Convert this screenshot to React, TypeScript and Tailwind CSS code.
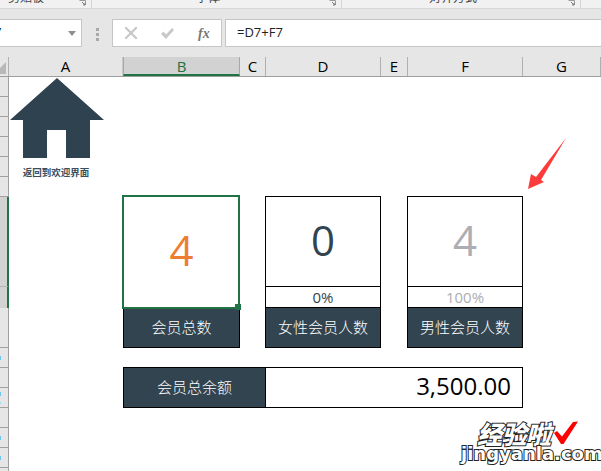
import React from 'react';
import { X } from 'lucide-react';

const columns = [
  { name: 'A', cls: 'w-[114px] border-r border-[#c8c8c8] text-black' },
  { name: 'B', cls: 'w-[117px] bg-[#d2d2d2] border-x border-[#a8a8a8] border-b-2 border-b-[#217346] text-[#217346]' },
  { name: 'C', cls: 'w-[26px] border-r border-[#b0b0b0] text-black' },
  { name: 'D', cls: 'w-[115px] border-r border-[#b0b0b0] text-black' },
  { name: 'E', cls: 'w-[27px] border-r border-[#b0b0b0] text-black' },
  { name: 'F', cls: 'w-[115px] border-r border-[#b0b0b0] text-black' },
  { name: 'G', cls: 'w-[78px] border-r border-[#b0b0b0] text-black' },
];

// gutter rows, the last ones run off the bottom of the window
const plainTop = [0, 1, 2, 3, 4, 5];
const plainBottom = [1, 0, 2, 0, 1, 1, 0];

const Launcher = () => (
  <svg width="8" height="6" viewBox="0 0 8 6" className="shrink-0">
    <path d="M0.5 0.5H6.5V5" fill="none" stroke="#9a9a9a" />
    <path d="M3 2L6 5M4 5H6V3" fill="none" stroke="#7a7a7a" />
  </svg>
);

const Ribbon = () => (
  <div className="flex h-[9px] overflow-hidden bg-[#f1f1f1] border-b border-[#d6d6d6] text-[12px] leading-[12px] text-[#444444]">
    <div className="flex w-[92px] pl-[8px] pr-[4px] justify-between border-r border-[#d6d6d6]">
      <span className="-mt-[8px]">剪贴板</span>
      <Launcher />
    </div>
    <div className="flex w-[250px] pl-[104px] pr-[4px] justify-between border-r border-[#d6d6d6]">
      <span className="-mt-[8px]">字体</span>
      <Launcher />
    </div>
    <div className="flex w-[239px] pl-[87px] pr-[4px] justify-between border-r border-[#d6d6d6]">
      <span className="-mt-[8px]">对齐方式</span>
      <Launcher />
    </div>
  </div>
);

const FormulaBar = () => (
  <div className="flex h-[48px] items-start pt-[10px] bg-[#e6e6e6]">
    <div className="flex items-center justify-between w-[82px] h-[28px] bg-white border border-l-0 border-[#c6c6c6] overflow-hidden">
      <span className="-ml-[6px] text-[13px] text-black">7</span>
      <span className="mr-[5px] border-x-[4px] border-t-[5px] border-x-transparent border-t-[#8f8f8f]" />
    </div>
    <div className="flex flex-col gap-[2px] ml-[14px] mt-[9px] w-[16px]">
      <span className="w-[3px] h-[3px] bg-[#a8a8a8]" />
      <span className="w-[3px] h-[3px] bg-[#a8a8a8]" />
      <span className="w-[3px] h-[3px] bg-[#a8a8a8]" />
    </div>
    <div className="flex items-center w-[110px] h-[28px] bg-white border border-[#c6c6c6]">
      <X className="w-[20px] h-[20px] ml-[8px] text-[#c8c8c8]" strokeWidth={2.8} />
      <svg width="15" height="13" viewBox="0 0 15 13" className="ml-[19px]">
        <path d="M1 7L3.5 4.5L6 7.5L12 1L14 3L6 12Z" fill="#c8c8c8" />
      </svg>
      <span className="ml-[23px] text-[14px] font-bold italic text-[#777777] font-['Liberation_Serif',serif]">fx</span>
    </div>
    <div className="flex items-center flex-1 h-[28px] ml-[3px] pl-[11px] bg-white border border-r-0 border-[#c6c6c6] text-[13px] text-[#222222]">
      =D7+F7
    </div>
  </div>
);

const ColumnHeader = () => (
  <div className="flex h-[20px] bg-[#e6e6e6] border-b border-[#9e9e9e] text-[15px] leading-[19px]">
    <div className="relative w-[9px] border-r border-[#b0b0b0]">
      <svg width="6" height="12" viewBox="0 0 6 12" className="absolute left-0 top-[5px]">
        <path d="M0 12V6L6 0V12Z" fill="#b8b8b8" />
      </svg>
    </div>
    {columns.map((c) => (
      <div key={c.name} className={`text-center ${c.cls}`}>
        {c.name}
      </div>
    ))}
  </div>
);

const Gutter = () => (
  <div className="flex flex-col w-[9px] shrink-0 bg-[#e6e6e6] border-r border-[#a0a0a0]">
    {plainTop.map((r) => (
      <div key={r} className="h-[20px] shrink-0 border-b border-[#a0a0a0]" />
    ))}
    <div className="h-[90px] shrink-0 -mr-px bg-[#d2d2d2] border-r-2 border-b border-r-[#217346] border-b-[#b4b4b4]" />
    <div className="h-[21px] shrink-0 -mr-px bg-[#d2d2d2] border-r-2 border-r-[#217346]" />
    <div className="h-[40px] shrink-0 border-b border-[#a0a0a0]" />
    {plainBottom.map((specks, i) => (
      <div key={i} className="flex flex-col justify-center gap-[6px] h-[20px] shrink-0 border-b border-[#a0a0a0]">
        {specks > 0 && <span className="w-px h-[4px] bg-[#6cc5f0]" />}
        {specks > 1 && <span className="w-px h-[2px] bg-[#9adcf5]" />}
      </div>
    ))}
  </div>
);

const HomeLink = () => (
  <div className="w-[114px] pt-[1px] pl-[1px]">
    <div className="flex flex-col items-center w-[94px]">
      <svg width="94" height="81" viewBox="0 0 94 81">
        <path d="M47 0L94 42H80V80H56V52H37V80H13V42H0Z" fill="#2f424f" />
      </svg>
      <span className="mt-[7px] -ml-[2px] text-[9.5px] leading-[12px] font-bold text-[#3b4d59] font-['Noto_Sans_CJK_SC',sans-serif]">
        返回到欢迎界面
      </span>
    </div>
  </div>
);

const TotalCard = () => (
  <div className="flex flex-col w-[117px] h-[152px]">
    <div className="relative flex items-center justify-center h-[112px] pb-[6px] text-[42px] text-[#ed7d31]">
      4
      <div className="absolute -left-px -top-px right-0 -bottom-px border-2 border-[#217346]" />
      <div className="absolute -right-px -bottom-[2px] w-[6px] h-[6px] bg-[#217346]" />
    </div>
    <div className="flex items-center justify-center h-[40px] bg-[#32444f] border border-t-0 border-black text-[15px] font-light text-white font-['Noto_Sans_CJK_SC',sans-serif]">
      会员总数
    </div>
  </div>
);

const StatCard = ({ value, pct, label, color }: { value: string; pct: string; label: string; color: string }) => (
  <div className="flex flex-col w-[116px] h-[152px] border border-black">
    <div className={`flex items-center justify-center h-[90px] pb-[4px] border-b border-black text-[42px] ${color}`}>{value}</div>
    <div className={`flex items-center justify-center h-[21px] border-b border-black text-[15px] ${color}`}>{pct}</div>
    <div className="flex items-center justify-center flex-1 bg-[#32444f] text-[15px] font-light text-white font-['Noto_Sans_CJK_SC',sans-serif]">
      {label}
    </div>
  </div>
);

const Watermark = () => (
  <div className="absolute left-[461px] top-[419px] flex flex-col w-[130px]">
    <div className="flex items-center h-[28px] pl-[16px]">
      <span className="text-[25px] leading-[28px] font-black italic tracking-[-0.5px] text-white [-webkit-text-stroke:2px_#222222] [paint-order:stroke_fill] font-['Noto_Sans_CJK_SC',sans-serif]">
        经验啦
      </span>
      <svg width="24" height="24" viewBox="0 0 24 24" className="ml-[3px]">
        <path d="M0 12L3 10L8 15.5L19 1L24 0.5L9.5 23H7Z" fill="#ff0000" />
      </svg>
    </div>
    <span className="-mt-[2px] text-[18px] leading-[18px] font-bold text-white [-webkit-text-stroke:2px_#222222] [paint-order:stroke_fill] font-['DejaVu_Sans',sans-serif]">
      jingyanla.com
    </span>
  </div>
);

export default function App() {
  return (
    <div className="relative w-[601px] h-[471px] overflow-hidden bg-white font-['Open_Sans','Noto_Sans_CJK_SC',sans-serif]">
      <Ribbon />
      <FormulaBar />
      <ColumnHeader />
      <div className="flex h-[394px]">
        <Gutter />
        <HomeLink />
        <div className="flex flex-col pt-[119px]">
          <div className="flex">
            <TotalCard />
            <div className="ml-[25px]">
              <StatCard value="0" pct="0%" label="女性会员人数" color="text-[#32444f]" />
            </div>
            <div className="ml-[26px]">
              <StatCard value="4" pct="100%" label="男性会员人数" color="text-[#adadb3]" />
            </div>
          </div>
          <div className="flex h-[41px] w-[400px] mt-[19px] border border-black">
            <div className="flex items-center justify-center w-[142px] bg-[#32444f] border-r border-black text-[15px] font-light text-white font-['Noto_Sans_CJK_SC',sans-serif]">
              会员总余额
            </div>
            <div className="flex items-center justify-end flex-1 pr-[11px] pb-[3px] text-[24px] text-black">3,500.00</div>
          </div>
        </div>
      </div>

      {/* red marker arrow drawn on top of the sheet */}
      <svg width="40" height="53" viewBox="0 0 40 53" className="absolute left-[527px] top-[137px]">
        <path d="M1 52L4 37L9 40L39 1L14 43L17 45Z" fill="#fd3b3b" />
      </svg>
      <Watermark />
    </div>
  );
}
